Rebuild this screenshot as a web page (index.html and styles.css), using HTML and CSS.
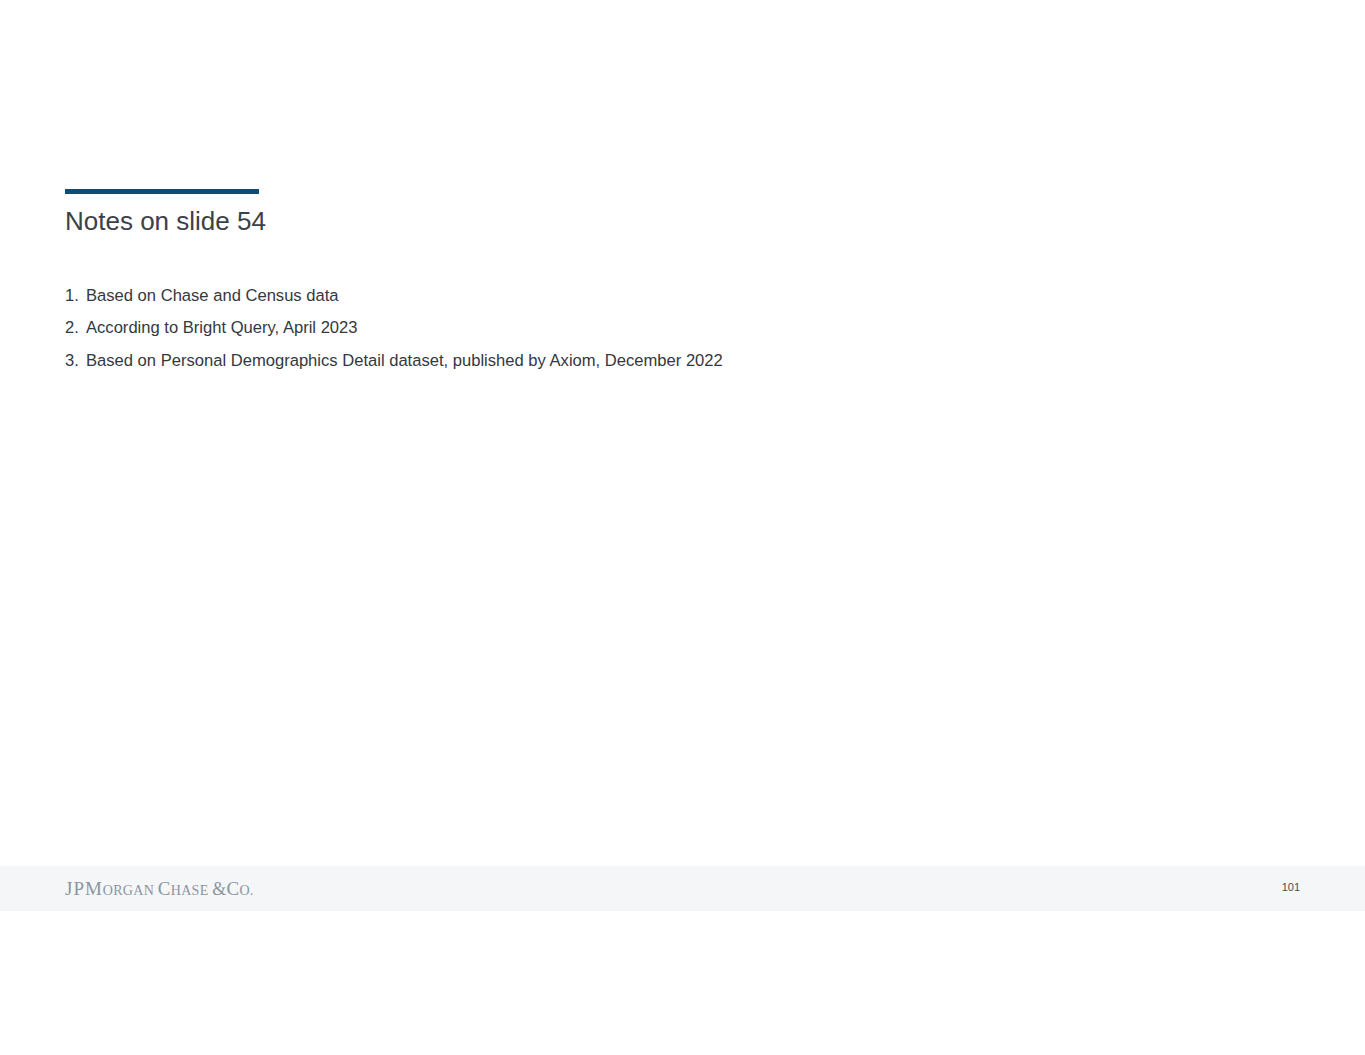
FILE: index.html
```html
<!DOCTYPE html>
<html lang="en">
<head>
<meta charset="utf-8">
<title>Notes on slide 54</title>
<link rel="stylesheet" href="styles.css">
</head>
<body>
<main class="slide">
  <div class="content">
    <div class="rule"></div>
    <h1 class="title">Notes on slide 54</h1>
    <ol class="notes">
      <li class="note"><span class="num">1.</span><span>Based on Chase and Census data</span></li>
      <li class="note"><span class="num">2.</span><span>According to Bright Query, April 2023</span></li>
      <li class="note"><span class="num">3.</span><span>Based on Personal Demographics Detail dataset, published by Axiom, December 2022</span></li>
    </ol>
  </div>
  <footer class="footer">
    <div class="logo"><span class="big jpm">JPM</span>ORGAN <span class="big">C</span>HASE <span class="amp">&amp;</span><span class="big">C</span>O.</div>
    <div class="page">101</div>
  </footer>
</main>
</body>
</html>
```
FILE: styles.css
```css
html, body {
  margin: 0;
  padding: 0;
  background: #fff;
}
.slide {
  width: 1365px;
  height: 1055px;
  display: flex;
  flex-direction: column;
  font-family: "Liberation Sans", Arial, sans-serif;
  padding-top: 189px;
  box-sizing: border-box;
}
.content {
  height: 677px;
  padding-left: 65px;
}
.rule {
  width: 194px;
  height: 5px;
  background: #0f4c75;
}
.title {
  margin: 10px 0 0;
  font-size: 26px;
  line-height: 34px;
  font-weight: 400;
  color: #3c4148;
}
.notes {
  list-style: none;
  margin: 41.6px 0 0;
  padding: 0;
}
.note {
  display: flex;
  font-size: 16.58px;
  line-height: 32.5px;
  color: #34383e;
}
.num {
  width: 21px;
}
.footer {
  height: 45px;
  background: #f5f6f8;
  display: flex;
  align-items: center;
  justify-content: space-between;
  padding: 0 65px;
}
.logo {
  font-family: "Liberation Serif", "Times New Roman", serif;
  font-size: 14px;
  letter-spacing: 0.28px;
  color: #8b959e;
  white-space: pre;
}
.big {
  font-size: 19px;
}
.jpm {
  letter-spacing: 1px;
}
.amp {
  font-size: 18px;
}
.page {
  font-size: 11px;
  color: #4a4f56;
  margin-bottom: 3px;
}
```
